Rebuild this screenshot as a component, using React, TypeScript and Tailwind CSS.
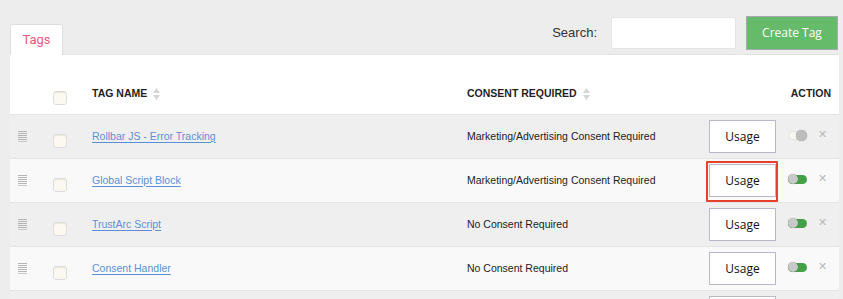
import React from "react";

type Row = { name: string; consent: string; on: boolean; highlight?: boolean; hidden?: boolean };

const rows: Row[] = [
  { name: "Rollbar JS - Error Tracking", consent: "Marketing/Advertising Consent Required", on: false },
  { name: "Global Script Block", consent: "Marketing/Advertising Consent Required", on: true, highlight: true },
  { name: "TrustArc Script", consent: "No Consent Required", on: true },
  { name: "Consent Handler", consent: "No Consent Required", on: true },
  { name: "", consent: "", on: true, hidden: true },
];

function SortIcon() {
  return (
    <svg width="7" height="12" viewBox="0 0 7 12" className="ml-[6px]">
      <path d="M3.5 0 L7 5 H0 Z" fill="#d6d6d6" />
      <path d="M3.5 12 L7 7 H0 Z" fill="#d6d6d6" />
    </svg>
  );
}

function Checkbox({ className = "" }: { className?: string }) {
  return (
    <div
      className={
        "w-[14px] h-[14px] rounded-[3px] bg-[#fcfaf0] border border-[#dcdcdc] shadow-[inset_0_1px_1px_rgba(0,0,0,0.08)] " +
        className
      }
    />
  );
}

function Handle() {
  return (
    <div className="flex flex-col gap-[1px] w-[9px]">
      {[0, 1, 2, 3, 4].map((i) => (
        <div key={i} className="h-[1px] bg-[#b5b5b5] w-full" />
      ))}
      <div className="h-[1px] bg-[#c8c8c8] w-full" />
    </div>
  );
}

function Toggle({ on }: { on: boolean }) {
  if (on) {
    return (
      <div className="relative w-[19px] h-[9px] rounded-full bg-[#43a047]">
        <div className="absolute left-0 top-[-1px] w-[10px] h-[10px] rounded-full bg-[#c9c9c9] shadow-[0_0_1px_rgba(0,0,0,0.4)]" />
      </div>
    );
  }
  return (
    <div className="relative w-[19px] h-[9px] rounded-full bg-[#f7f7f2] border border-[#e2e2e2]">
      <div className="absolute right-[-1px] top-[-2px] w-[11px] h-[11px] rounded-full bg-[#bdbdbd] shadow-[0_0_1px_rgba(0,0,0,0.4)]" />
    </div>
  );
}

export default function App() {
  return (
    <div
      className="w-[843px] h-[299px] overflow-hidden bg-[#ededed]"
      style={{ fontFamily: '"Liberation Sans", Arial, sans-serif' }}
    >
      {/* top bar */}
      <div className="h-[54px] flex items-end pl-[10px] pr-[5px] relative">
        <div
          className="w-[53px] h-[31px] bg-white border border-[#dedede] border-b-0 rounded-t-[2px] flex items-center justify-center text-[13px] text-[#ec5a7e] mb-[-1px]"
          style={{ fontFamily: "Roboto, sans-serif" }}
        >
          Tags
        </div>
        <div className="flex-1" />
        <div className="flex items-center self-start mt-[16px]">
          <span className="text-[13px] text-[#333] mr-[14px]">Search:</span>
          <div className="w-[125px] h-[32px] bg-white rounded-[2px] border border-[#e6e6e6]" />
          <div
            className="ml-[10px] w-[92px] h-[34px] bg-[#66bb6a] border border-[#a9a9b3] flex items-center justify-center text-white text-[12px]"
            style={{ fontFamily: '"Open Sans", sans-serif' }}
          >
            Create Tag
          </div>
        </div>
      </div>

      {/* panel */}
      <div className="ml-[10px] mr-[4px] bg-white border-t border-[#e2e2e2]">
        {/* header */}
        <div className="h-[59px] flex items-end pb-[12px] text-[10.5px] font-bold text-[#1f1f1f]">
          <div className="w-[35px]" />
          <div className="w-[47px] pl-[8px]">
            <Checkbox className="translate-y-[3px]" />
          </div>
          <div className="w-[375px] flex items-center">
            TAG NAME
            <SortIcon />
          </div>
          <div className="w-[242px] flex items-center">
            CONSENT REQUIRED
            <SortIcon />
          </div>
          <div className="flex-1 flex justify-end pr-[8px]">ACTION</div>
        </div>
        {/* rows */}
        {rows.map((r, i) => (
          <div
            key={i}
            className={
              "h-[44px] flex items-center border-t border-[#e4e4e4] " +
              (i % 2 === 0 ? "bg-[#efefef]" : "bg-[#f9f9f9]")
            }
          >
            <div className="w-[35px] pl-[8px]">
              <Handle />
            </div>
            <div className="w-[47px] pl-[8px]">
              <Checkbox className="translate-y-[4px]" />
            </div>
            <div className="w-[375px] text-[10.5px] text-[#5b8fd8] underline underline-offset-2">
              {r.name}
            </div>
            <div className="w-[242px] text-[10.5px] text-[#222]">{r.consent}</div>
            <div className="relative">
              <div
                className="w-[67px] h-[33px] bg-white border border-[#bcb8cc] flex items-center justify-center text-[12px] text-[#111]"
                style={{ fontFamily: '"Open Sans", sans-serif' }}
              >
                {r.hidden ? "" : "Usage"}
              </div>
              {r.highlight && (
                <div className="absolute left-[-3px] top-[-3px] w-[72px] h-[41px] border-2 border-[#e8412b] rounded-[1px]" />
              )}
            </div>
            {!r.hidden && (
              <>
                <div className="ml-[12px] -translate-y-[1px]">
                  <Toggle on={r.on} />
                </div>
                <div className="ml-[11px] text-[11px] leading-none text-[#b9b9b9] -translate-y-[2px]">✕</div>
              </>
            )}
          </div>
        ))}
      </div>
    </div>
  );
}
